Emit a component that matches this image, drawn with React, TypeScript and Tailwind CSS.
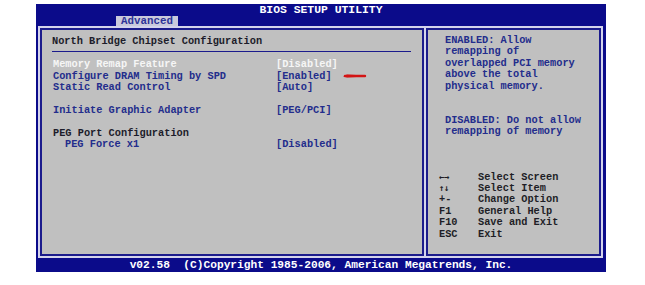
import React from 'react';

const ROW = 'h-[11.4px] leading-[11.4px] whitespace-pre';

const items: { label: string; value: string; selected?: boolean; arrow?: boolean; indent?: boolean; plain?: boolean }[] = [
  { label: 'Memory Remap Feature', value: '[Disabled]', selected: true },
  { label: 'Configure DRAM Timing by SPD', value: '[Enabled]', arrow: true },
  { label: 'Static Read Control', value: '[Auto]' },
  { label: '', value: '' },
  { label: 'Initiate Graphic Adapter', value: '[PEG/PCI]' },
  { label: '', value: '' },
  { label: 'PEG Port Configuration', value: '', plain: true },
  { label: 'PEG Force x1', value: '[Disabled]', indent: true },
];

const helpText = [
  'ENABLED: Allow',
  'remapping of',
  'overlapped PCI memory',
  'above the total',
  'physical memory.',
  '',
  '',
  'DISABLED: Do not allow',
  'remapping of memory',
  '',
  '',
  '',
];

const keys = [
  { key: '←→', desc: 'Select Screen', small: true },
  { key: '↑↓', desc: 'Select Item', small: true },
  { key: '+-', desc: 'Change Option' },
  { key: 'F1', desc: 'General Help' },
  { key: 'F10', desc: 'Save and Exit' },
  { key: 'ESC', desc: 'Exit' },
];

const RedMark = () => (
  <svg width="26" height="6" viewBox="0 0 26 6" className="ml-[9px]">
    <path d="M2 3.2 L6 1.6 L24 2.4 L24.5 3.6 L6 4.4 Z" fill="#d31414" />
    <line x1="4" y1="3" x2="24" y2="3" stroke="#d31414" strokeWidth="2.4" strokeLinecap="round" />
  </svg>
);

export default function App() {
  return (
    <div className="w-[645px] h-[285px] bg-white pt-[4px] pl-[36px] font-['Liberation_Mono','DejaVu_Sans_Mono',monospace] font-bold">
      <div className="w-[570px] h-[268px] bg-[#0b0b8a] flex flex-col">
        {/* title bar */}
        <div className="h-[22px] flex flex-col">
          <div className="h-[12px] leading-[12px] text-center text-white text-[11.4px]">BIOS SETUP UTILITY</div>
          <div className="h-[10px] flex">
            <div className="ml-[80px] w-[62px] bg-[#cacadc] text-[#2e3398] text-[10.8px] leading-[11px] text-center">
              Advanced
            </div>
          </div>
        </div>

        {/* main area */}
        <div className="ml-[2px] w-[565px] h-[232px] bg-[#d4d4ec] p-[2px] flex gap-[2px] text-[10.3px]">
          <div className="w-[384px] border-2 border-[#1b1b8c] bg-[#c0c0c0] pl-[10px] pt-[6px]">
            <div className="leading-[11.4px] text-[#1c1c2a]">North Bridge Chipset Configuration</div>
            <div className="mt-[3.6px] mr-[11px] h-px bg-[#1b1b8c]" />
            <div className="mt-[7.2px]">
              {items.map((it, i) => (
                <div key={i} className={`${ROW} flex items-center`}>
                  <span
                    className={`w-[224px] ${it.indent ? 'pl-[13px]' : 'pl-px'} ${
                      it.selected ? 'text-[#f6f6f6]' : it.plain ? 'text-[#1c1c2a]' : 'text-[#232d8c]'
                    }`}
                  >
                    {it.label}
                  </span>
                  <span className={it.selected ? 'text-[#f6f6f6]' : 'text-[#232d8c]'}>{it.value}</span>
                  {it.arrow && <RedMark />}
                </div>
              ))}
            </div>
          </div>

          <div className="flex-1 border-2 border-[#1b1b8c] bg-[#c0c0c0] pl-[17px] pt-[5px]">
            {helpText.map((t, i) => (
              <div key={i} className={`${ROW} text-[#232d8c]`}>
                {t}
              </div>
            ))}
            {keys.map((k) => (
              <div key={k.desc} className={`${ROW} -ml-[6px] flex text-[#1e1e26]`}>
                <span className={`w-[39px] ${k.small ? "text-[9px] font-['DejaVu_Sans_Mono'] tracking-[-0.5px]" : ''}`}>{k.key}</span>
                <span>{k.desc}</span>
              </div>
            ))}
          </div>
        </div>

        {/* footer */}
        <div className="h-[14px] leading-[14px] text-center text-white text-[11.2px] whitespace-pre">
          v02.58  (C)Copyright 1985-2006, American Megatrends, Inc.
        </div>
      </div>
    </div>
  );
}
